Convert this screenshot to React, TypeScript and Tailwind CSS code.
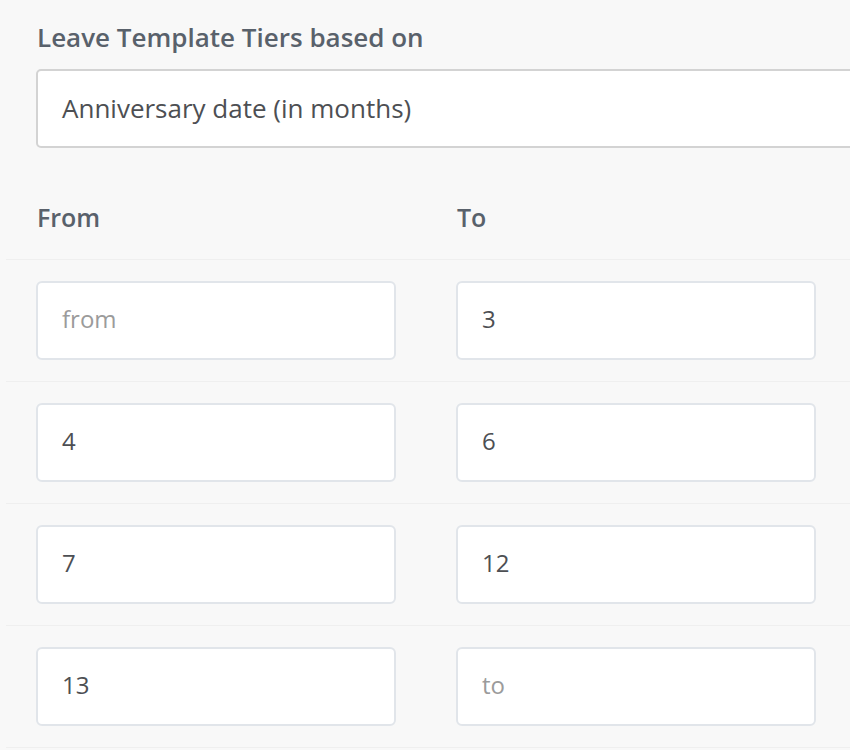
import React from 'react';

const tiers = [
  { from: '', to: '3' },
  { from: '4', to: '6' },
  { from: '7', to: '12' },
  { from: '13', to: '' },
];

const TierInput: React.FC<{ value: string; placeholder: string }> = ({ value, placeholder }) => (
  <div className="w-[360px] h-[79px] bg-white border-2 border-[#e1e5ea] rounded-[6px] flex items-center pl-[24px] pb-[3px] text-[24px]">
    {value ? (
      <span className="text-[#4d4f53]">{value}</span>
    ) : (
      <span className="text-[#9b9b9b]">{placeholder}</span>
    )}
  </div>
);

export default function App() {
  return (
    <div
      className="w-[850px] h-[750px] overflow-hidden bg-[#f8f8f8]"
      style={{ fontFamily: '"Open Sans", "Liberation Sans", sans-serif' }}
    >
      <div className="pl-[36px] pt-[19px]">
        <h2 className="text-[26px] font-semibold text-[#59616b] leading-[36px] pl-[1px]">
          Leave Template Tiers based on
        </h2>
        <div className="mt-[14px] w-[840px] h-[79px] bg-white border-2 border-[#d3d3d3] rounded-[5px] flex items-center pl-[24px] text-[26px] text-[#4d4f53]">
          Anniversary date (in months)
        </div>
      </div>

      {/* Column headers */}
      <div className="flex h-[111px] pt-[54px] pl-[37px] text-[25px] leading-[30px] font-semibold text-[#59616b]">
        <div className="w-[420px]">From</div>
        <div>To</div>
      </div>

      {/* Tier rows */}
      <div className="ml-[6px]">
        {tiers.map((t, i) => (
          <div key={i} className="border-t border-[#efefef] py-[21px] pl-[30px] flex gap-[60px]">
            <TierInput value={t.from} placeholder="from" />
            <TierInput value={t.to} placeholder="to" />
          </div>
        ))}
        <div className="border-t border-[#efefef]" />
      </div>
    </div>
  );
}
